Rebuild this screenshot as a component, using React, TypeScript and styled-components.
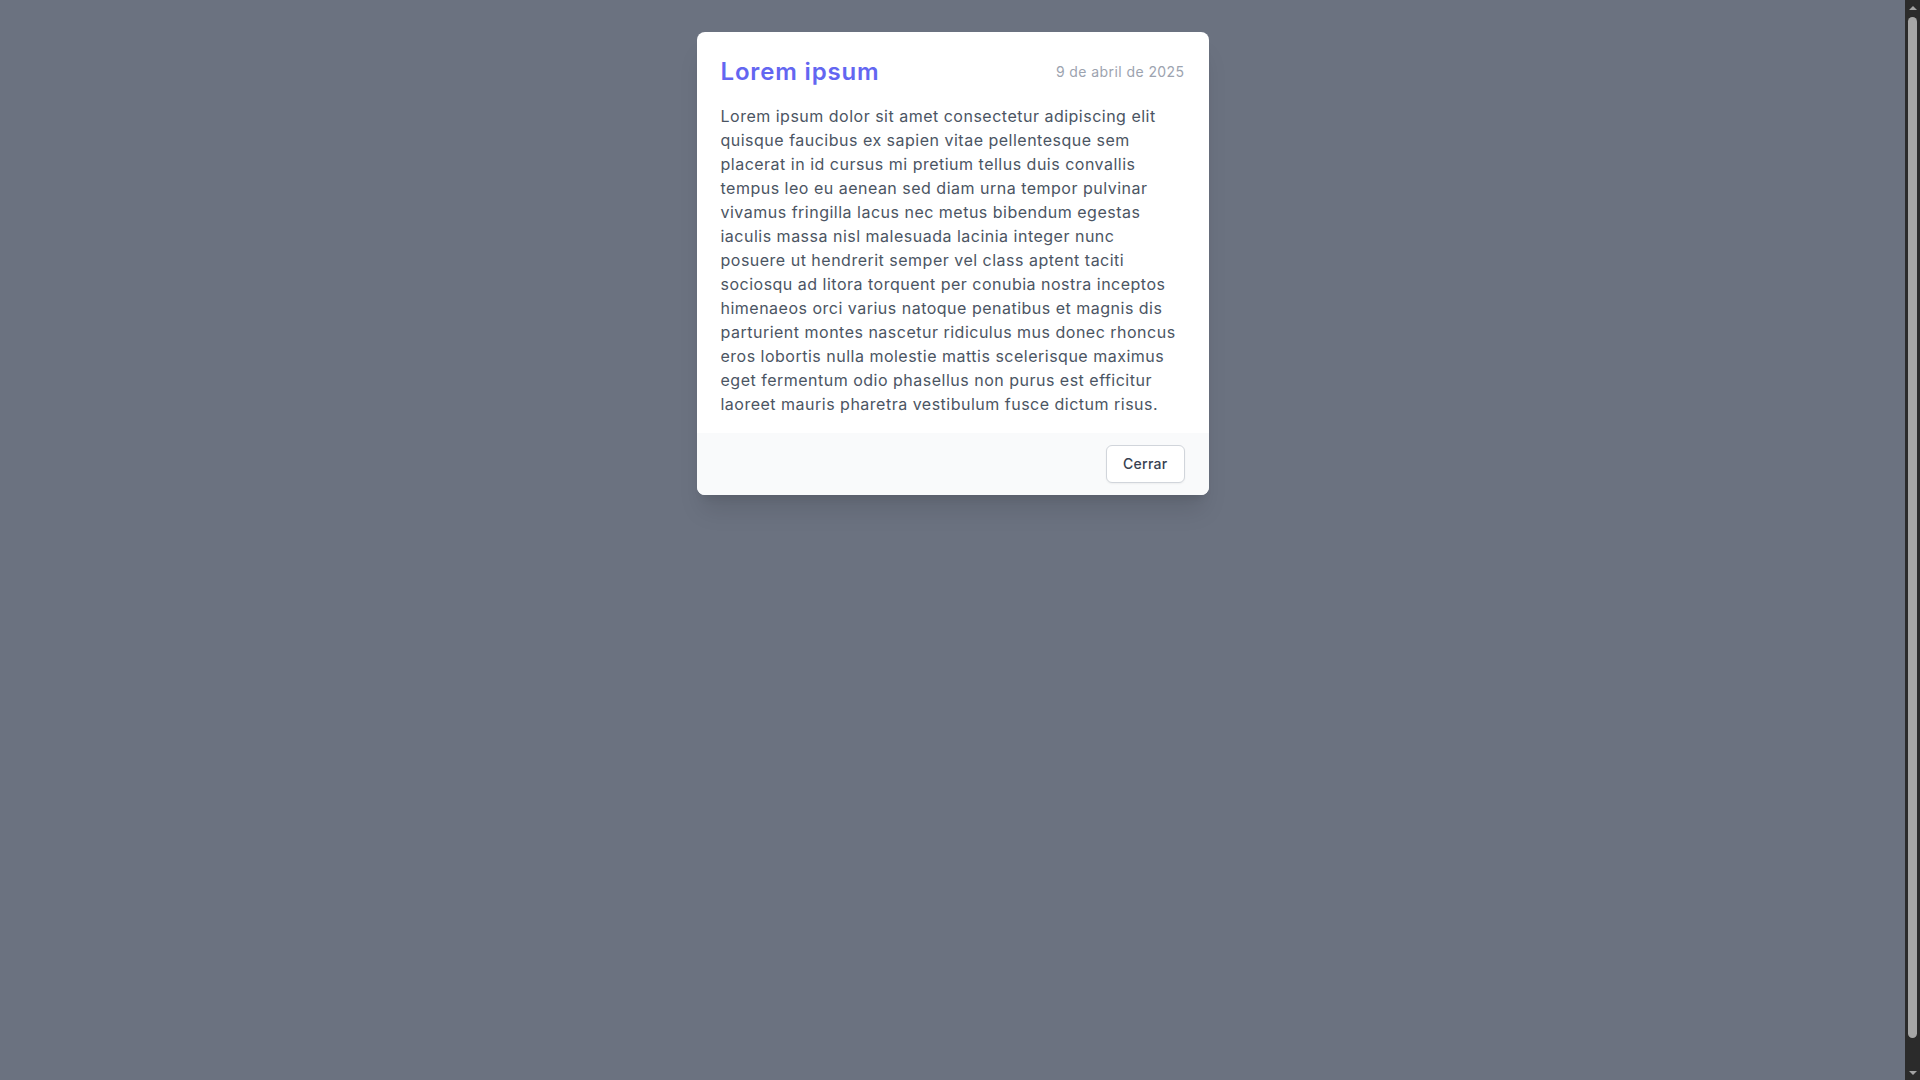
import styled, { createGlobalStyle } from 'styled-components'

const GlobalStyle = createGlobalStyle`
  html,
  body {
    margin: 0;
    background: #6b7280;
  }

  * {
    box-sizing: border-box;
  }
`

const Backdrop = styled.div`
  min-height: 100vh;
  padding: 32px 15px 0 0;
  box-sizing: content-box;
  display: flex;
  justify-content: center;
  align-items: flex-start;
  background: #6b7280;
  font-family: Inter, 'Open Sans', 'Liberation Sans', sans-serif;
`

const Dialog = styled.section`
  width: 512px;
  background: #ffffff;
  border-radius: 8px;
  overflow: hidden;
  box-shadow: 0 20px 25px -5px rgba(0, 0, 0, 0.1), 0 8px 10px -6px rgba(0, 0, 0, 0.1);
`

const Body = styled.div`
  padding: 24px 24px 17px;
`

const Header = styled.header`
  display: flex;
  justify-content: space-between;
  align-items: center;
  margin-bottom: 16px;
`

const Title = styled.h2`
  margin: 0;
  font-size: 24px;
  line-height: 32px;
  font-weight: 600;
  color: #6366f1;
  letter-spacing: 0.035em;
`

const DateLabel = styled.span`
  font-size: 14px;
  line-height: 20px;
  color: #9ca3af;
  letter-spacing: 0.03em;
`

const Text = styled.p`
  margin: 0;
  font-size: 16px;
  line-height: 24px;
  color: #4b5563;
  letter-spacing: 0.031em;
`

const Footer = styled.footer`
  display: flex;
  justify-content: flex-end;
  padding: 12px 24px;
  background: #f9fafb;
`

const CloseButton = styled.button`
  padding: 8px 16px;
  font-family: inherit;
  font-size: 14px;
  line-height: 20px;
  font-weight: 500;
  color: #374151;
  background: #ffffff;
  border: 1px solid #d1d5db;
  border-radius: 6px;
  box-shadow: 0 1px 2px rgba(0, 0, 0, 0.05);
  letter-spacing: 0.02em;
  cursor: pointer;
`

// page scrollbar (dark theme look)
const ScrollTrack = styled.div`
  position: fixed;
  top: 0;
  right: 0;
  width: 15px;
  height: 100vh;
  display: flex;
  flex-direction: column;
  align-items: center;
  background: #2b2b2b;
`

const Arrow = styled.div<{ $down?: boolean }>`
  width: 15px;
  height: 15px;
  display: grid;
  place-items: center;

  &::before {
    content: '';
    width: 0;
    height: 0;
    border-left: 4px solid transparent;
    border-right: 4px solid transparent;
    ${({ $down }) => ($down ? 'border-top: 4px solid #a3a3a3;' : 'border-bottom: 4px solid #a3a3a3;')}
  }
`

const Thumb = styled.div`
  flex: 1;
  width: 9px;
  margin: 2px 0 27px;
  border-radius: 5px;
  background: #a6a6a6;
`

const content =
  'Lorem ipsum dolor sit amet consectetur adipiscing elit quisque faucibus ex sapien vitae pellentesque sem placerat in id cursus mi pretium tellus duis convallis tempus leo eu aenean sed diam urna tempor pulvinar vivamus fringilla lacus nec metus bibendum egestas iaculis massa nisl malesuada lacinia integer nunc posuere ut hendrerit semper vel class aptent taciti sociosqu ad litora torquent per conubia nostra inceptos himenaeos orci varius natoque penatibus et magnis dis parturient montes nascetur ridiculus mus donec rhoncus eros lobortis nulla molestie mattis scelerisque maximus eget fermentum odio phasellus non purus est efficitur laoreet mauris pharetra vestibulum fusce dictum risus.'

export default function App() {
  return (
    <>
      <GlobalStyle />
      <Backdrop>
        <Dialog role="dialog" aria-labelledby="dialog-title">
          <Body>
            <Header>
              <Title id="dialog-title">Lorem ipsum</Title>
              <DateLabel>9 de abril de 2025</DateLabel>
            </Header>
            <Text>{content}</Text>
          </Body>
          <Footer>
            <CloseButton type="button">Cerrar</CloseButton>
          </Footer>
        </Dialog>
      </Backdrop>
      <ScrollTrack aria-hidden="true">
        <Arrow />
        <Thumb />
        <Arrow $down />
      </ScrollTrack>
    </>
  )
}
